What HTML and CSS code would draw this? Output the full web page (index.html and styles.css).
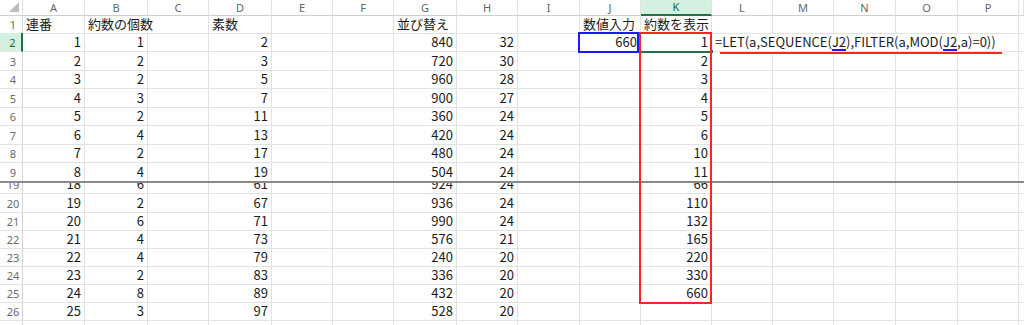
FILE: index.html
```html
<!DOCTYPE html>
<html lang="ja">
<head>
<meta charset="utf-8">
<title>Sheet</title>
<link rel="stylesheet" href="styles.css">
</head>
<body>
<div class="sheet">
  <div class="row hdr">
    <div class="corner"><svg width="12" height="11" viewBox="0 0 12 11"><polygon points="11,0 11,10 1,10" fill="#bdbdbd"/></svg></div>
    <div>A</div><div>B</div><div>C</div><div>D</div><div>E</div><div>F</div><div>G</div><div>H</div><div>I</div><div>J</div><div class="sel">K</div><div>L</div><div>M</div><div>N</div><div>O</div><div>P</div><div></div>
  </div>
  <div class="row h17">
    <div class="rh">1</div><div>連番</div><div class="nb">約数の個数</div><div></div><div>素数</div><div></div><div></div><div>並び替え</div><div></div><div></div><div>数値入力</div><div>約数を表示</div><div></div><div></div><div></div><div></div><div></div><div></div>
  </div>
  <div class="row h19">
    <div class="rh act-rh">2</div><div class="n">1</div><div class="n">1</div><div></div><div class="n">2</div><div></div><div></div><div class="n">840</div><div class="n">32</div><div></div><div class="n">660</div><div class="n act">1</div><div class="nb formula">=LET(a,SEQUENCE(<span class="ref">J2</span>),FILTER(a,MOD(<span class="ref">J2</span>,a)=0))</div><div class="nb"></div><div class="nb"></div><div class="nb"></div><div></div><div></div>
  </div>
  <div class="row h19">
    <div class="rh">3</div><div class="n">2</div><div class="n">2</div><div></div><div class="n">3</div><div></div><div></div><div class="n">720</div><div class="n">30</div><div></div><div></div><div class="n">2</div><div></div><div></div><div></div><div></div><div></div><div></div>
  </div>
  <div class="row h18">
    <div class="rh">4</div><div class="n">3</div><div class="n">2</div><div></div><div class="n">5</div><div></div><div></div><div class="n">960</div><div class="n">28</div><div></div><div></div><div class="n">3</div><div></div><div></div><div></div><div></div><div></div><div></div>
  </div>
  <div class="row h19">
    <div class="rh">5</div><div class="n">4</div><div class="n">3</div><div></div><div class="n">7</div><div></div><div></div><div class="n">900</div><div class="n">27</div><div></div><div></div><div class="n">4</div><div></div><div></div><div></div><div></div><div></div><div></div>
  </div>
  <div class="row h18">
    <div class="rh">6</div><div class="n">5</div><div class="n">2</div><div></div><div class="n">11</div><div></div><div></div><div class="n">360</div><div class="n">24</div><div></div><div></div><div class="n">5</div><div></div><div></div><div></div><div></div><div></div><div></div>
  </div>
  <div class="row h19">
    <div class="rh">7</div><div class="n">6</div><div class="n">4</div><div></div><div class="n">13</div><div></div><div></div><div class="n">420</div><div class="n">24</div><div></div><div></div><div class="n">6</div><div></div><div></div><div></div><div></div><div></div><div></div>
  </div>
  <div class="row h18">
    <div class="rh">8</div><div class="n">7</div><div class="n">2</div><div></div><div class="n">17</div><div></div><div></div><div class="n">480</div><div class="n">24</div><div></div><div></div><div class="n">10</div><div></div><div></div><div></div><div></div><div></div><div></div>
  </div>
  <div class="row h18 last">
    <div class="rh">9</div><div class="n">8</div><div class="n">4</div><div></div><div class="n">19</div><div></div><div></div><div class="n">504</div><div class="n">24</div><div></div><div></div><div class="n">11</div><div></div><div></div><div></div><div></div><div></div><div></div>
  </div>
  <div class="split"></div>
  <div class="row h11 clip">
    <div class="rh">19</div><div class="n">18</div><div class="n">6</div><div></div><div class="n">61</div><div></div><div></div><div class="n">924</div><div class="n">24</div><div></div><div></div><div class="n">66</div><div></div><div></div><div></div><div></div><div></div><div></div>
  </div>
  <div class="row h19">
    <div class="rh">20</div><div class="n">19</div><div class="n">2</div><div></div><div class="n">67</div><div></div><div></div><div class="n">936</div><div class="n">24</div><div></div><div></div><div class="n">110</div><div></div><div></div><div></div><div></div><div></div><div></div>
  </div>
  <div class="row h18">
    <div class="rh">21</div><div class="n">20</div><div class="n">6</div><div></div><div class="n">71</div><div></div><div></div><div class="n">990</div><div class="n">24</div><div></div><div></div><div class="n">132</div><div></div><div></div><div></div><div></div><div></div><div></div>
  </div>
  <div class="row h18">
    <div class="rh">22</div><div class="n">21</div><div class="n">4</div><div></div><div class="n">73</div><div></div><div></div><div class="n">576</div><div class="n">21</div><div></div><div></div><div class="n">165</div><div></div><div></div><div></div><div></div><div></div><div></div>
  </div>
  <div class="row h18">
    <div class="rh">23</div><div class="n">22</div><div class="n">4</div><div></div><div class="n">79</div><div></div><div></div><div class="n">240</div><div class="n">20</div><div></div><div></div><div class="n">220</div><div></div><div></div><div></div><div></div><div></div><div></div>
  </div>
  <div class="row h18">
    <div class="rh">24</div><div class="n">23</div><div class="n">2</div><div></div><div class="n">83</div><div></div><div></div><div class="n">336</div><div class="n">20</div><div></div><div></div><div class="n">330</div><div></div><div></div><div></div><div></div><div></div><div></div>
  </div>
  <div class="row h18">
    <div class="rh">25</div><div class="n">24</div><div class="n">8</div><div></div><div class="n">89</div><div></div><div></div><div class="n">432</div><div class="n">20</div><div></div><div></div><div class="n">660</div><div></div><div></div><div></div><div></div><div></div><div></div>
  </div>
  <div class="row h18">
    <div class="rh">26</div><div class="n">25</div><div class="n">3</div><div></div><div class="n">97</div><div></div><div></div><div class="n">528</div><div class="n">20</div><div></div><div></div><div></div><div></div><div></div><div></div><div></div><div></div><div></div>
  </div>
  <div class="row h18">
    <div class="rh"></div><div></div><div></div><div></div><div></div><div></div><div></div><div></div><div></div><div></div><div></div><div></div><div></div><div></div><div></div><div></div><div></div><div></div>
  </div>

  <div class="box-blue"></div>
  <div class="box-red"></div>
  <div class="line-red"></div>
</div>
</body>
</html>
```

FILE: styles.css
```css
html, body {
  margin: 0;
  padding: 0;
  background: #ffffff;
}

body {
  font-family: "Noto Sans CJK JP", "Noto Sans", sans-serif;
  font-size: 13px;
  color: #1b1b1b;
}

.sheet {
  position: relative;
  width: 1024px;
  height: 325px;
  overflow: hidden;
}

.row {
  display: grid;
  grid-template-columns: 23px 62px 63px 61px 63px 61px 61px 63px 61px 62px 61px 71px 61px 61px 62px 62px 61px 1fr;
}

.row > div {
  box-sizing: border-box;
  border-right: 1px solid #e2e2e2;
  border-bottom: 1px solid #e2e2e2;
  white-space: nowrap;
  display: flex;
  align-items: flex-end;
  padding: 0 3px 2px 3px;
  line-height: 15px;
  min-width: 0;
}

.h11 { height: 11px; }
.h17 { height: 17px; }
.h18 { height: 18px; }
.h19 { height: 19px; }

.last > div { border-bottom: none; }

.clip > div { overflow: hidden; }

.row > .n { justify-content: flex-end; }
.row > .nb { border-right-color: transparent; }

/* column header row */
.hdr { height: 16px; }
.hdr > div {
  justify-content: center;
  align-items: center;
  padding: 0;
  font-family: "Noto Sans", sans-serif;
  font-size: 11px;
  line-height: 14px;
  color: #666666;
  border-bottom: 1px solid #cfcfcf;
}
.hdr > .corner {
  justify-content: flex-end;
  align-items: flex-end;
  padding: 0 2px 2px 0;
}
.hdr > .sel {
  background: #d3f0e0;
  color: #0f6a36;
  border-bottom: 2px solid #1e7145;
}

/* row headers */
.row > .rh {
  justify-content: center;
  padding: 0 0 1px 4px;
  font-family: "Noto Sans", sans-serif;
  font-size: 11px;
  color: #6b6b6b;
  border-right-color: #d6d6d6;
}
.row > .act-rh {
  background: #d3f0e0;
  color: #0f6a36;
  border-right: 2px solid #1e7145;
}

.split {
  height: 2px;
  background: #8a8a8a;
}

/* active cell */
.row > .act {
  position: relative;
  border-bottom: 1px solid #217346;
  box-shadow: 0 1px 0 #217346;
}
.row > .act::after {
  content: "";
  position: absolute;
  right: -2px;
  bottom: -2px;
  width: 3px;
  height: 3px;
  background: #217346;
}

/* formula annotation */
.formula { overflow: visible; }
.ref {
  text-decoration: underline;
  text-decoration-color: #1a1aff;
  text-decoration-thickness: 2px;
  text-underline-offset: 2px;
  text-decoration-skip-ink: none;
}

/* highlight boxes */
.box-blue {
  position: absolute;
  left: 578px;
  top: 32px;
  width: 61px;
  height: 21px;
  box-sizing: border-box;
  border: 2px solid #1a1aff;
}
.box-red {
  position: absolute;
  left: 639px;
  top: 32px;
  width: 73px;
  height: 272px;
  box-sizing: border-box;
  border: 2px solid #ff2424;
}
.line-red {
  position: absolute;
  left: 720px;
  top: 52px;
  width: 282px;
  height: 2px;
  background: #ff2424;
}
```
